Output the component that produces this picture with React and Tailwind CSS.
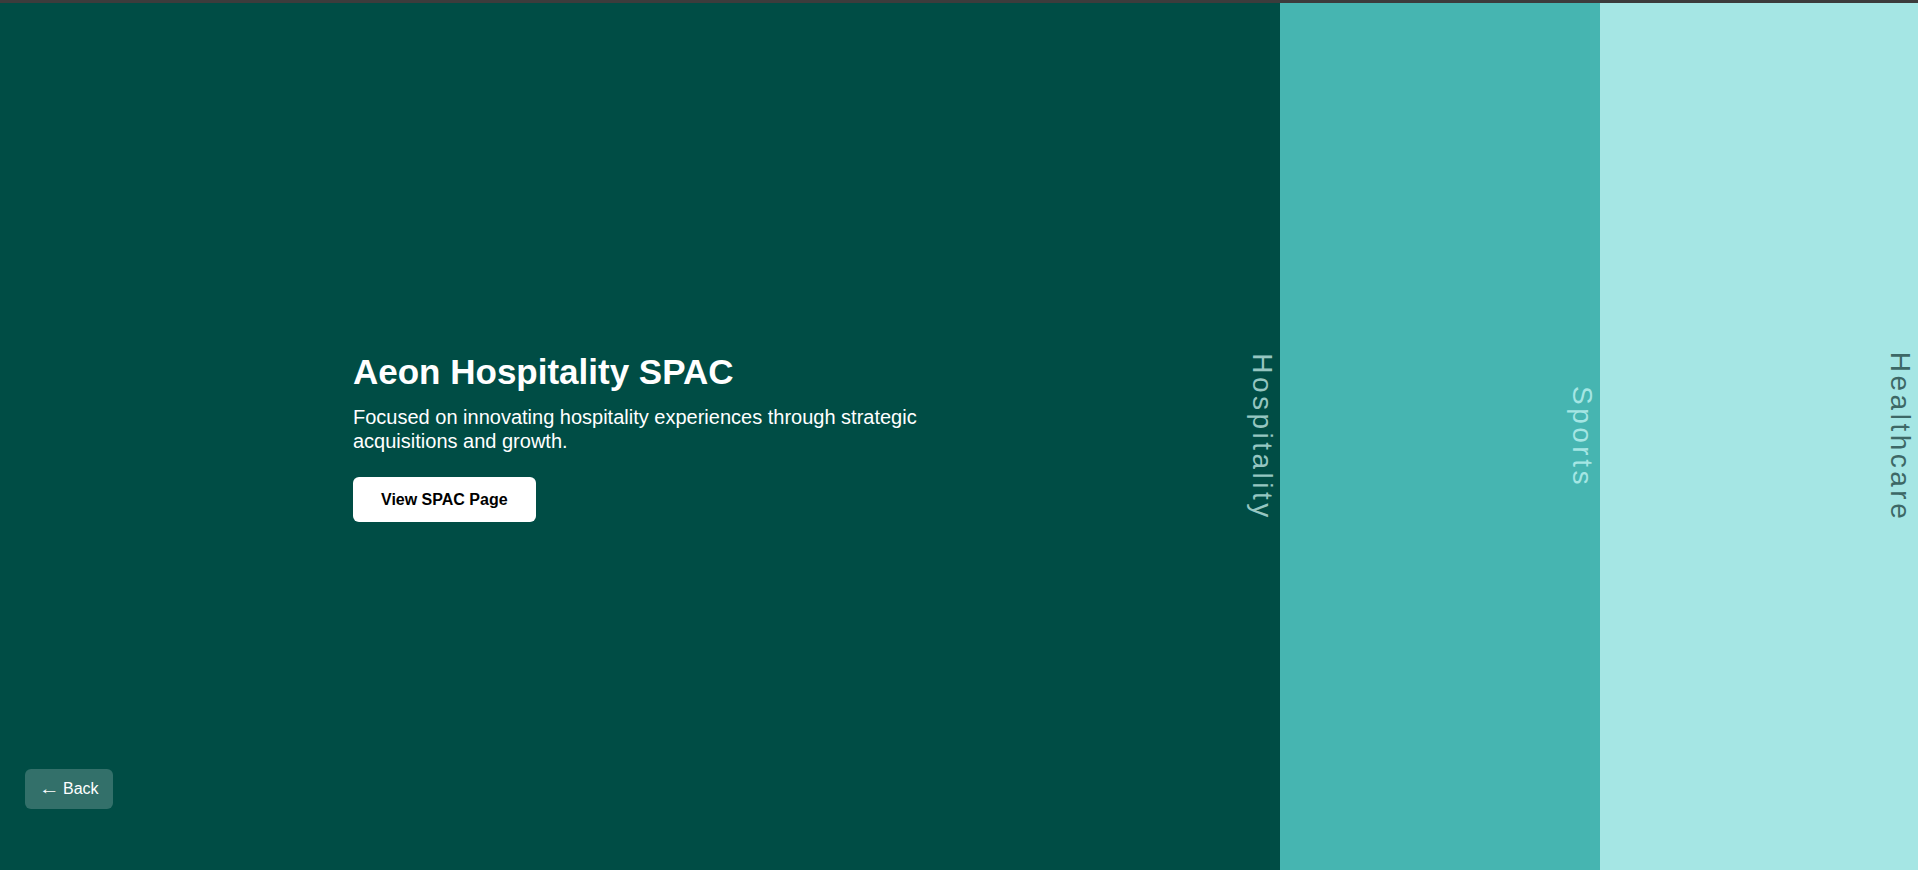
import React, { useState } from 'react';

const sectors = [
    {
        key: 'hospitality',
        label: 'Hospitality',
        title: 'Aeon Hospitality SPAC',
        text: 'Focused on innovating hospitality experiences through strategic acquisitions and growth.',
    },
    { key: 'sports', label: 'Sports' },
    { key: 'healthcare', label: 'Healthcare' },
];

export default function App() {
    const [active, setActive] = useState('hospitality');

    return (
        <div className="w-full h-[870px] flex flex-col bg-[#3c3c3c] font-['Liberation_Sans',Arial,sans-serif] overflow-hidden">
            <div className="h-[3px] shrink-0 bg-[#3c3c3c]"></div>
            <div className="flex flex-1 min-h-0">
                {/* Hospitality (open) */}
                <div className="relative w-[1280px] shrink-0 bg-[#004d45] flex items-center justify-center">
                    <div className="w-[574px] text-white">
                        <h1 className="text-[35px] leading-[42px] font-bold mb-[13px]">{sectors[0].title}</h1>
                        <p className="text-[20px] leading-[23.5px] mb-[24px]">{sectors[0].text}</p>
                        <button className="h-[45px] px-[28px] rounded-md bg-white text-black text-[16px] font-bold">
                            View SPAC Page
                        </button>
                    </div>
                    <span className="absolute right-[2px] top-1/2 -translate-y-1/2 [writing-mode:vertical-rl] text-[28px] leading-[32px] tracking-[3.5px] text-[#96c6c1]">
                        Hospitality
                    </span>
                    <button className="absolute left-[25px] bottom-[61px] h-10 px-[14px] rounded-md bg-white/20 text-white text-[16px] flex items-center gap-[4px]">
                        <span className="inline-block scale-x-[1.3] origin-left mr-[4px]">←</span>
                        <span>Back</span>
                    </button>
                </div>

                {/* Sports */}
                <div onClick={() => setActive('sports')} className="relative w-[320px] shrink-0 bg-[#46b5b1] cursor-pointer">
                    <span className="absolute right-[2px] top-1/2 -translate-y-1/2 [writing-mode:vertical-rl] text-[28px] leading-[32px] tracking-[3.5px] text-[#a5e6e4]">
                        Sports
                    </span>
                </div>

                {/* Healthcare */}
                <div onClick={() => setActive('healthcare')} className="relative flex-1 bg-[#a5e6e4] cursor-pointer">
                    <span className="absolute right-[2px] top-1/2 -translate-y-1/2 [writing-mode:vertical-rl] text-[28px] leading-[32px] tracking-[3.5px] text-[#3d6866]">
                        Healthcare
                    </span>
                </div>
            </div>
        </div>
    );
}
